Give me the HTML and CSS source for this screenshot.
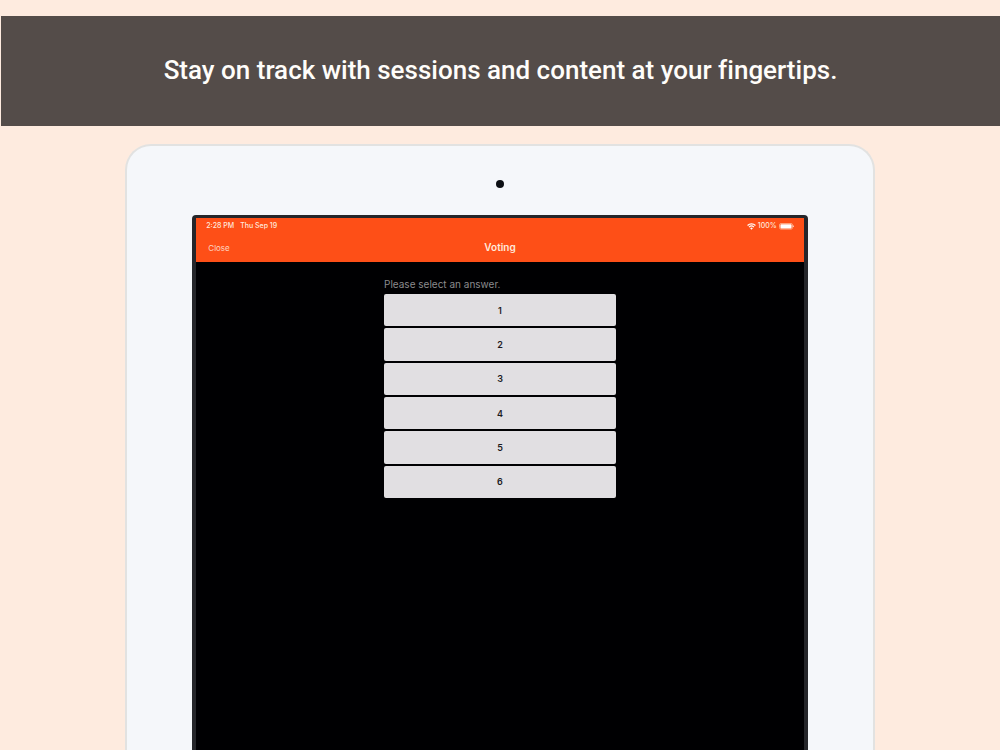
FILE: index.html
```html
<!DOCTYPE html>
<html lang="en">
<head>
  <meta charset="UTF-8" />
  <meta name="viewport" content="width=device-width, initial-scale=1.0" />
  <title>Voting</title>
  <link rel="stylesheet" href="styles.css">
</head>
<body>
  <header class="banner">
    <h1>Stay on track with sessions and content at your fingertips.</h1>
  </header>

  <main class="tablet">
    <div class="camera"></div>
    <div class="screen">
      <div class="top">
        <div class="status-bar">
          <div class="status-left">
            <span>2:28 PM</span>
            <span>Thu Sep 19</span>
          </div>
          <div class="status-right">
            <svg class="wifi" viewBox="0 0 16 12" aria-hidden="true">
              <path d="M1 4.2a10 10 0 0 1 14 0" />
              <path d="M3.6 7a6.3 6.3 0 0 1 8.8 0" />
              <path class="wifi-dot" d="M8 11.6L5.6 9.1a3.4 3.4 0 0 1 4.8 0z" />
            </svg>
            <span>100%</span>
            <svg class="battery" viewBox="0 0 15 7" aria-hidden="true">
              <rect class="battery-case" x="0.5" y="0.5" width="13" height="5.6" rx="1.5" />
              <rect x="1.4" y="1.2" width="11.2" height="4.2" rx="0.8" />
              <path d="M14.2 2.3a1.2 1.2 0 0 1 0 2z" />
            </svg>
          </div>
        </div>
        <nav class="nav-bar">
          <a class="close" href="#">Close</a>
          <h2>Voting</h2>
        </nav>
      </div>

      <div class="poll">
        <p id="question">Please select an answer.</p>
        <div class="answers" role="group" aria-labelledby="question">
          <button type="button">1</button>
          <button type="button">2</button>
          <button type="button">3</button>
          <button type="button">4</button>
          <button type="button">5</button>
          <button type="button">6</button>
        </div>
      </div>
    </div>
  </main>
</body>
</html>
```

FILE: styles.css
```css
* {
  box-sizing: border-box;
}
body {
  margin: 0;
  padding-top: 16px;
  min-height: 100vh;
  display: flex;
  flex-direction: column;
  background: #feebdf;
  font-family: Inter, sans-serif;
}
h1, h2, p {
  margin: 0;
}
.banner {
  margin-left: 1px;
  padding: 38px 16px 40px;
  background: #544c49;
  color: #fffdfa;
  text-align: center;
}
.banner h1 {
  font-family: Roboto, sans-serif;
  font-size: 26px;
  line-height: 32px;
  font-weight: 500;
  font-variant-ligatures: none;
}
.tablet {
  flex: 1;
  display: flex;
  flex-direction: column;
  align-items: center;
  width: 75%;
  margin: 18px auto 0;
  background: #f5f7fa;
  border: 2px solid #e2e2e1;
  border-bottom: none;
  border-radius: 26px 26px 0 0;
}
.camera {
  width: 8px;
  height: 8px;
  margin: 34px 0 27px;
  border-radius: 50%;
  background: #0c0f14;
}
.screen {
  flex: 1;
  width: 82.5%;
  background: #000002;
  border: 4px solid #25262a;
  border-top-width: 3px;
  border-bottom: none;
  border-radius: 4px 4px 0 0;
}
.top {
  background: #fe4f17;
  color: #ffe9dc;
}
.status-bar {
  display: flex;
  justify-content: space-between;
  padding: 2px 10px 0;
  font-size: 7px;
  line-height: 12px;
  font-weight: 500;
}
.status-left {
  display: flex;
  gap: 6px;
}
.status-right {
  display: flex;
  align-items: center;
  gap: 2px;
}
.wifi {
  width: 9px;
  height: 7px;
  fill: none;
  stroke: #fff;
  stroke-width: 2;
}
.wifi .wifi-dot {
  fill: #fff;
  stroke: none;
}
.battery {
  width: 15px;
  height: 7px;
  fill: #fff;
}
.battery .battery-case {
  fill: none;
  stroke: #ffa27c;
}
.nav-bar {
  display: grid;
  grid-template-columns: 1fr auto 1fr;
  align-items: baseline;
  padding: 8px 12px 0;
  height: 30px;
}
.close {
  color: #ffd6c2;
  font-size: 8px;
  text-decoration: none;
}
.nav-bar h2 {
  font-size: 10px;
  line-height: 14px;
  font-weight: 600;
}
.poll {
  width: 38%;
  min-width: 232px;
  margin: 0 auto;
  padding-top: 14px;
}
.poll p {
  color: #8b8b8d;
  font-size: 10px;
  line-height: 16px;
  margin-bottom: 2px;
}
.answers {
  display: grid;
  grid-auto-rows: 1fr;
  gap: 2px;
  min-height: 204px;
}
.answers button {
  background: #e1dfe2;
  color: #1c1b1e;
  border: none;
  border-radius: 2px;
  padding: 0;
  font-family: inherit;
  font-size: 9px;
  font-weight: 600;
  cursor: pointer;
}
```
